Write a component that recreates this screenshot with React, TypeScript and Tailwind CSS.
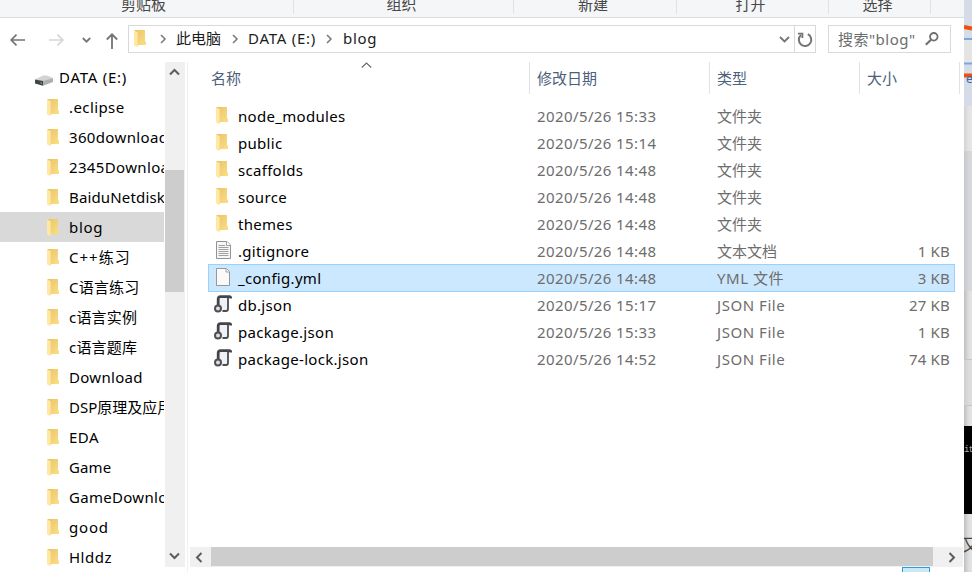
import React from "react";

const FONT = "font-['Noto_Sans','Noto_Sans_CJK_SC',sans-serif] font-[370]";

function Folder() {
  return (
    <svg width="12" height="18" viewBox="0 0 12 18" className="block shrink-0">
      <defs>
        <linearGradient id="fback" x1="0" y1="0" x2="1" y2="1">
          <stop offset="0" stopColor="#eac268" />
          <stop offset="0.55" stopColor="#f3d27a" />
          <stop offset="1" stopColor="#fbdf84" />
        </linearGradient>
      </defs>
      <path d="M0.5 0H11V11L12 12V15H3.5L0.5 14Z" fill="url(#fback)" />
      <path d="M0 0.3L4 2.5V16L2.8 17L0 15.2Z" fill="#ffe9a2" />
      <path d="M3.7 2.5V16" stroke="#f5d888" strokeWidth="0.8" />
    </svg>
  );
}

function TextDoc() {
  return (
    <svg width="16" height="18" viewBox="0 0 16 18" className="block shrink-0">
      <path d="M0.5 0.5H11L14.5 4V17.5H0.5Z" fill="#f7f7f7" stroke="#929292" />
      <path d="M10.5 0.5V4.5H14.5" fill="#fff" stroke="#a0a0a0" />
      <path d="M2.5 4.5H9M2.5 6.5H12.5M2.5 8.5H12.5M2.5 10.5H12.5M2.5 12.5H12.5M2.5 14.5H12.5" stroke="#a0a0a0" />
    </svg>
  );
}

function BlankDoc() {
  return (
    <svg width="16" height="18" viewBox="0 0 16 18" className="block shrink-0">
      <path d="M0.5 0.5H10.5L13.5 3.5V17.5H0.5Z" fill="#fafafa" stroke="#979797" />
      <path d="M10 0.5V4H13.5" fill="#fff" stroke="#a0a0a0" />
    </svg>
  );
}

function ScriptDoc() {
  return (
    <svg width="18" height="18" viewBox="0 0 18 18" className="block shrink-0">
      <path d="M5.5 2H14L13.5 16H8L5.5 11Z" fill="#eef1f5" />
      <path d="M4.2 10V4Q4.2 1.6 6.5 1.6H15.5Q16.8 1.6 16.8 3.6" fill="none" stroke="#454549" strokeWidth="2.8" />
      <path d="M14 3V14Q14 16 12 16H8.5" fill="none" stroke="#4c4c50" strokeWidth="1.8" />
      <circle cx="4" cy="13.6" r="3" fill="#dedede" stroke="#505054" strokeWidth="2" />
    </svg>
  );
}

function Drive() {
  return (
    <svg width="18" height="11" viewBox="0 0 18 11" className="block">
      <path d="M0 4.5L8 0.5H12L18 3L8 6.5Z" fill="#d2d3d6" />
      <path d="M0 4.5L8 6V10.8L0 8.5Z" fill="#434548" />
      <path d="M8 6L18 3V7L8 10.8Z" fill="#aeb0b4" />
      <path d="M5.5 7.8L7 8.2" stroke="#5dd67c" />
    </svg>
  );
}

type LineProps = { d: string; w: number; h: number; stroke?: string; sw?: number };
function Line({ d, w, h, stroke = "#5c5c5c", sw = 2 }: LineProps) {
  return (
    <svg width={w} height={h} viewBox={`0 0 ${w} ${h}`} className="block shrink-0">
      <path d={d} fill="none" stroke={stroke} strokeWidth={sw} />
    </svg>
  );
}

const tree = [
  [".eclipse", "tracking-[0.4px]"],
  ["360download", "tracking-[0.35px]"],
  ["2345Downloads", "tracking-[0.35px]"],
  ["BaiduNetdisk", "tracking-[0.15px]"],
  ["blog", "tracking-[0.7px]"],
  ["C++练习", "tracking-[1px]"],
  ["C语言练习", "tracking-[0.2px]"],
  ["c语言实例", "tracking-[0.2px]"],
  ["c语言题库", "tracking-[0.2px]"],
  ["Download", "tracking-[0.3px]"],
  ["DSP原理及应用", ""],
  ["EDA", "tracking-[0.5px]"],
  ["Game", "tracking-[0.1px]"],
  ["GameDownload", "tracking-[0.3px]"],
  ["good", "tracking-[0.8px]"],
  ["Hlddz", "tracking-[0.5px]"],
];

const files = [
  { name: "node_modules", date: "2020/5/26 15:33", type: "文件夹", size: "", icon: "folder" },
  { name: "public", date: "2020/5/26 15:14", type: "文件夹", size: "", icon: "folder" },
  { name: "scaffolds", date: "2020/5/26 14:48", type: "文件夹", size: "", icon: "folder" },
  { name: "source", date: "2020/5/26 14:48", type: "文件夹", size: "", icon: "folder" },
  { name: "themes", date: "2020/5/26 14:48", type: "文件夹", size: "", icon: "folder" },
  { name: ".gitignore", date: "2020/5/26 14:48", type: "文本文档", size: "1 KB", icon: "text" },
  { name: "_config.yml", date: "2020/5/26 14:48", type: "YML 文件", size: "3 KB", icon: "blank" },
  { name: "db.json", date: "2020/5/26 15:17", type: "JSON File", size: "27 KB", icon: "json" },
  { name: "package.json", date: "2020/5/26 15:33", type: "JSON File", size: "1 KB", icon: "json" },
  { name: "package-lock.json", date: "2020/5/26 14:52", type: "JSON File", size: "74 KB", icon: "json" },
];

function FileIcon({ kind }: { kind: string }) {
  if (kind === "folder") return <div className="pl-[2px] pt-[2px]"><Folder /></div>;
  if (kind === "text") return <div className="pl-[2px]"><TextDoc /></div>;
  if (kind === "blank") return <div className="pl-[2px]"><BlankDoc /></div>;
  return <ScriptDoc />;
}

function Ribbon() {
  const groups = [
    ["剪贴板", "w-[294px] pr-[6px]"],
    ["组织", "w-[220px] pr-[4px]"],
    ["新建", "w-[163px] pr-[4px]"],
    ["打开", "w-[152px] pr-[4px]"],
    ["选择", "w-[102px] pr-[4px]"],
  ];
  return (
    <div className="flex h-[18px] w-[964px] overflow-hidden border-b border-[#d9dadb] bg-[#f5f6f7] text-[#474747]">
      {groups.map(([label, cls]) => (
        <div key={label} className={`flex h-[14px] items-end justify-center border-r border-[#e1e2e3] ${cls}`}>
          <span className="mb-[2px] h-[16px] leading-[16px]">{label}</span>
        </div>
      ))}
    </div>
  );
}

function AddressBar() {
  const crumb = <Line d="M1 1L5 5L1 9" w={7} h={10} stroke="#777" sw={1.5} />;
  return (
    <div className="flex h-[44px] pt-[7px]">
      <div className="flex h-[29px] w-[128px] items-center">
        <div className="pl-[10px]"><Line d="M15 6H1M6.5 0.7L1.2 6L6.5 11.3" w={16} h={12} stroke="#747474" sw={1.7} /></div>
        <div className="pl-[23px]"><Line d="M0 6H14M8.5 0.7L13.8 6L8.5 11.3" w={16} h={12} stroke="#d6d6d6" sw={1.7} /></div>
        <div className="pl-[17px]"><Line d="M0.8 1L4.5 4.7L8.2 1" w={9} h={6} stroke="#777" sw={1.8} /></div>
        <div className="pl-[15px] pt-[2px]"><Line d="M6 16V1.3M0.8 6.5L6 1.3L11.2 6.5" w={12} h={16} stroke="#747474" sw={1.8} /></div>
      </div>
      <div className="flex h-[28px] w-[688px] border border-[#d9d9d9] text-[#1c1c1c]">
        <div className="flex flex-1 items-center">
          <div className="w-[31px] pl-[5px]"><Folder /></div>
          {crumb}
          <span className="w-[57px] pb-[2px] pl-[9px] whitespace-nowrap">此电脑</span>
          <div className="pl-[8px]">{crumb}</div>
          <span className="w-[86px] pb-[2px] pl-[9px] whitespace-nowrap tracking-[0.75px]">DATA (E:)</span>
          <div className="pl-[1px]">{crumb}</div>
          <span className="pb-[2px] pl-[10px] tracking-[0.7px]">blog</span>
        </div>
        <div className="flex items-center pr-[4px] pt-[2px]"><Line d="M1 1L5.5 5.5L10 1" w={11} h={8} stroke="#747474" sw={1.8} /></div>
        <div className="flex w-[21px] items-center justify-center border-l border-[#d9d9d9] pt-[2px]">
          <svg width="16" height="16" viewBox="0 0 16 16">
            <path d="M10.8 2.2A6.2 6.2 0 1 1 4 3.1" fill="none" stroke="#747474" strokeWidth="2" />
            <path d="M1 1.7H5.4V6" fill="none" stroke="#747474" strokeWidth="1.8" />
          </svg>
        </div>
      </div>
      <div className="ml-[12px] flex h-[28px] w-[123px] items-center border border-[#d9d9d9] pl-[9px] text-[#6d6d6d]">
        <span className="w-[87px] whitespace-nowrap tracking-[0.5px]">搜索"blog"</span>
        <svg width="14" height="14" viewBox="0 0 14 14">
          <circle cx="8.8" cy="4.8" r="3.8" fill="none" stroke="#707070" strokeWidth="1.8" />
          <path d="M6 7.7L0.8 12.8" stroke="#707070" strokeWidth="2.2" />
        </svg>
      </div>
    </div>
  );
}

function Sidebar() {
  return (
    <div className="flex h-[510px] w-[188px] border-r border-[#f0f0f0]">
      <div className="w-[164px] overflow-hidden text-black">
        <div className="flex h-[30px] items-center pl-[35px]">
          <div className="pt-[7px]"><Drive /></div>
          <span className="pl-[6px] whitespace-nowrap tracking-[0.75px]">DATA (E:)</span>
        </div>
        {tree.map(([name, cls]) => (
          <div key={name} className={`flex h-[30px] items-center pl-[47px] ${name === "blog" ? "bg-[#d9d9d9]" : ""}`}>
            <div className="pt-[2px]"><Folder /></div>
            <span className={`pl-[10px] whitespace-nowrap ${cls}`}>{name}</span>
          </div>
        ))}
      </div>
      <div className="ml-[1px] flex h-[505px] w-[20px] flex-col bg-[#f0f0f0]">
        <div className="flex h-[108px] w-[19px] justify-center pt-[6px]"><Line d="M1 6.5L5.5 2L10 6.5" w={11} h={8} /></div>
        <div className="h-[122px] w-[19px] bg-[#cdcdcd]" />
        <div className="flex w-[19px] flex-1 items-end justify-center pb-[7px]"><Line d="M1 1.5L5.5 6L10 1.5" w={11} h={8} /></div>
      </div>
    </div>
  );
}

function FileList() {
  return (
    <div className="flex h-[510px] w-[776px] flex-col">
      <div className="relative flex h-[32px] items-center text-[#4c607a]">
        <div className="absolute left-[173px] top-0"><Line d="M0.8 5.5L5.5 1L10.2 5.5" w={11} h={6} stroke="#6a6a6a" sw={1.1} /></div>
        <div className="flex h-full w-[342px] items-center border-r border-[#e2e2e2] pl-[23px]">名称</div>
        <div className="flex h-full w-[180px] items-center border-r border-[#e2e2e2] pl-[7px]">修改日期</div>
        <div className="flex h-full w-[150px] items-center border-r border-[#e2e2e2] pl-[7px]">类型</div>
        <div className="flex h-full w-[100px] items-center border-r border-[#e2e2e2] pl-[7px]">大小</div>
      </div>
      <div className="flex h-[453px] flex-col pl-[20px] pt-[8px]">
        {files.map((f) => (
          <div
            key={f.name}
            className={`-mb-px flex h-[28px] w-[747px] shrink-0 items-center border text-[#6d6d6d] ${
              f.icon === "blank" ? "border-[#99d1ff] bg-[#cce8ff]" : "border-transparent"
            }`}
          >
            <div className="w-[29px] pb-[2px] pl-[5px]"><FileIcon kind={f.icon} /></div>
            <span className="w-[299px] whitespace-nowrap text-black tracking-[0.3px]">{f.name}</span>
            <span className="w-[180px] whitespace-nowrap tracking-[0.4px]">{f.date}</span>
            <span className={`w-[149px] whitespace-nowrap ${f.icon === "json" || f.icon === "blank" ? "tracking-[0.55px]" : ""}`}>{f.type}</span>
            <span className="w-[84px] whitespace-nowrap text-right tracking-[0.2px]">{f.size}</span>
          </div>
        ))}
      </div>
      <div className="ml-[2px] flex h-[20px] w-[773px] items-center bg-[#f0f0f0]">
        <div className="w-[21px] pl-[5px]"><Line d="M6.5 1L2 5.5L6.5 10" w={8} h={11} /></div>
        <div className="h-[19px] w-[722px] self-start bg-[#cdcdcd]" />
        <div className="pl-[15px]"><Line d="M1.5 1L6 5.5L1.5 10" w={8} h={11} /></div>
      </div>
      <div className="ml-[714px] h-[5px] w-[28px] border border-b-0 border-[#2aa0da] bg-[#cbe8f6]" />
    </div>
  );
}

function Behind() {
  return (
    <div className="flex h-[572px] w-[8px] flex-col overflow-hidden bg-[#e4e4e5] text-[9px] shadow-[inset_5px_0_5px_-3px_#00000035]">
      <div className="h-[106px] bg-[#d5dce8]">
        <svg width="8" height="106" viewBox="0 0 8 106" className="block">
          <path d="M0 40H8V63H0Z" fill="#e4e4e4" />
          <path d="M0 39H8M0 63.5H8" stroke="#7da7db" strokeWidth="2" />
          <path d="M0 27L8 28.5M0 75.5H8" stroke="#ed500b" strokeWidth="4" />
          <text x="2" y="83" fill="#3768a5" fontSize="12" fontFamily="Noto Sans">e</text>
        </svg>
      </div>
      <div className="h-[45px] bg-[#e7e7e7]/50" />
      <div className="h-[140px] bg-[#ced0d4]/60" />
      <div className="h-[69px] border-b border-[#c6c6c6]" />
      <div className="h-[46px] border-b border-[#c6c6c6] bg-[#d8d8d8]/60" />
      <div className="h-[20px]" />
      <div className="h-[88px] bg-black pt-[16px] font-['Liberation_Mono',monospace] leading-[16px] tracking-[-1px] text-[#aaa]">it</div>
      <div className="-ml-[2px] pt-[21px] text-[17px] leading-[20px] whitespace-nowrap text-[#444]">又</div>
    </div>
  );
}

export default function App() {
  return (
    <div className={`flex h-[572px] w-[972px] overflow-hidden bg-white text-[15px] leading-[20px] ${FONT}`}>
      <div className="flex h-[572px] w-[964px] shrink-0 flex-col">
        <Ribbon />
        <AddressBar />
        <div className="flex">
          <Sidebar />
          <FileList />
        </div>
      </div>
      <Behind />
    </div>
  );
}
